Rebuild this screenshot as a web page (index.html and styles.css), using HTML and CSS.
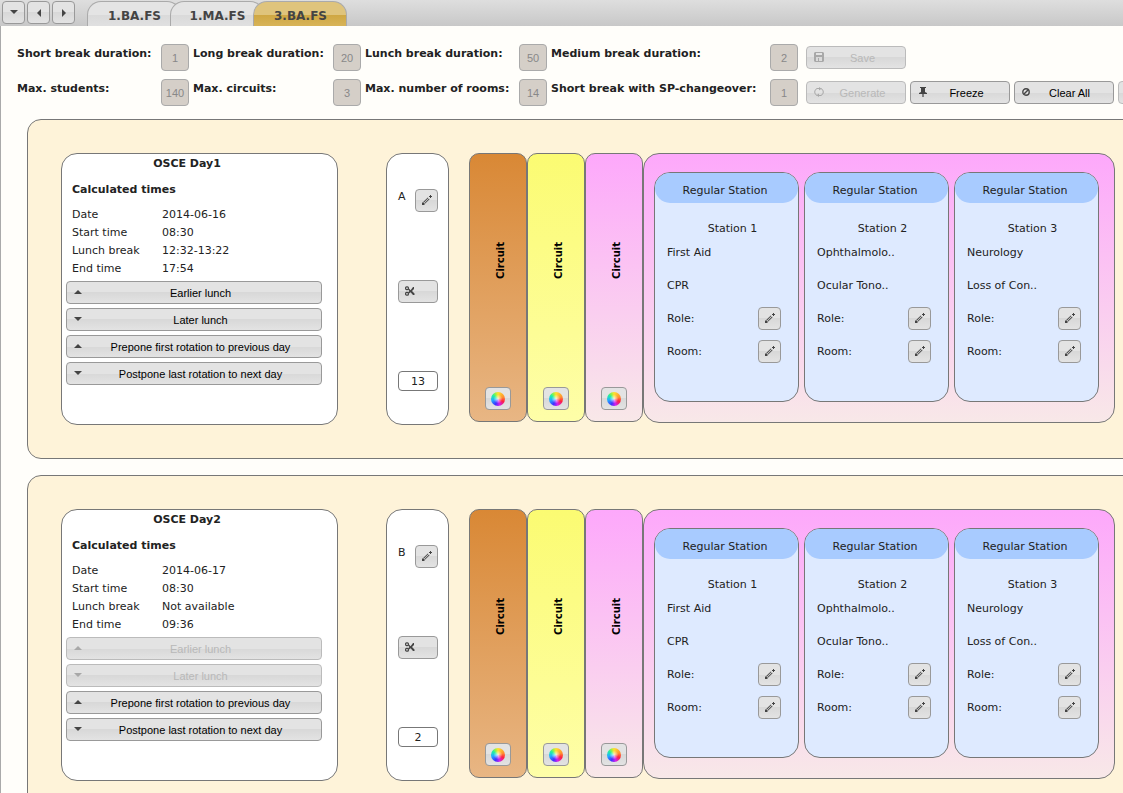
FILE: index.html
```
<!DOCTYPE html>
<html lang="en">
<head>
<meta charset="utf-8">
<title>OSCE circuit planning</title>
<link rel="stylesheet" href="styles.css">
</head>
<body>
<svg class="sprite" aria-hidden="true">
  <symbol id="down" viewBox="0 0 8 4"><path d="M0 0h8L4 4z"/></symbol>
  <symbol id="up" viewBox="0 0 8 4"><path d="M0 4h8L4 0z"/></symbol>
  <symbol id="left" viewBox="0 0 4 8"><path d="M4 0v8L0 4z"/></symbol>
  <symbol id="right" viewBox="0 0 4 8"><path d="M0 0v8l4-4z"/></symbol>
  <symbol id="pencil" viewBox="0 0 10 10"><path d="M0 10V8l1-1 1 1 1 1-1 1zM1.400 6.800 5.800 2.400l.6.6L2 7.400zM2.600 8 7 3.600l.6.6L3.200 8.600zM7 2V1h1V0h1v1h1v1H9v1H8V2z"/></symbol>
  <symbol id="scissors" viewBox="0 0 10 10"><g fill="none" stroke="currentColor" stroke-width="1.200"><rect x=".6" y=".8" width="2.800" height="2.800" rx="1"/><rect x=".6" y="6.400" width="2.800" height="2.800" rx="1"/></g><path d="M3 3.400 4 2.600l1.600 1.600L8 1h1v2L7 5l2.500 2.500V9H8L5.600 6.200 4 7.600l-1-1L4.400 5z"/></symbol>
  <symbol id="disk" viewBox="0 0 10 10"><path fill-rule="evenodd" d="M1 0h8l1 1v8l-1 1H1L0 9V1zM2 1v2h6V1zM2 5v4h2V6h1v3h3V5z"/></symbol>
  <symbol id="refresh" viewBox="0 0 10 10"><g fill="none" stroke="currentColor" stroke-width="1"><path d="M3 8.500C0 7 0 3 3 1.500h3M7 1.500c3 1.500 3 5.500 0 7H4"/></g><path d="M5 0v3.500L7.500 1.700zM5 6.500V10L2.500 8.300z"/></symbol>
  <symbol id="pin" viewBox="0 0 8 10"><path d="M1 0h6v1H6v4l2 1v1H4.600v3H3.400V7H0V6l2-1V1H1z"/></symbol>
  <symbol id="cancel" viewBox="0 0 8 8"><g fill="none" stroke="currentColor" stroke-width="1.400"><circle cx="4" cy="4" r="3.200"/><path d="M2 6l4-4"/></g></symbol>
</svg>

<header class="topbar">
  <div class="scrollers">
    <button class="btn square" aria-label="List tabs"><svg class="ico wide"><use href="#down"/></svg></button>
    <button class="btn square" aria-label="Previous tab"><svg class="ico tall"><use href="#left"/></svg></button>
    <button class="btn square" aria-label="Next tab"><svg class="ico tall"><use href="#right"/></svg></button>
  </div>
  <nav class="tabs">
    <a class="tab" href="#">1.BA.FS</a>
    <a class="tab" href="#">1.MA.FS</a>
    <a class="tab active" href="#">3.BA.FS</a>
  </nav>
</header>

<main class="page">
  <form class="settings">
    <label for="sb">Short break duration:</label><input id="sb" value="1" disabled>
    <label for="lb">Long break duration:</label><input id="lb" value="20" disabled>
    <label for="lu">Lunch break duration:</label><input id="lu" value="50" disabled>
    <label for="mb">Medium break duration:</label><input id="mb" value="2" disabled>
    <div class="actions">
      <button type="button" class="btn" disabled><svg class="ico"><use href="#disk"/></svg><span>Save</span></button>
    </div>
    <label for="ms">Max. students:</label><input id="ms" value="140" disabled>
    <label for="mc">Max. circuits:</label><input id="mc" value="3" disabled>
    <label for="mr">Max. number of rooms:</label><input id="mr" value="14" disabled>
    <label for="sp">Short break with SP-changeover:</label><input id="sp" value="1" disabled>
    <div class="actions">
      <button type="button" class="btn" disabled><svg class="ico"><use href="#refresh"/></svg><span>Generate</span></button>
      <button type="button" class="btn"><svg class="ico"><use href="#pin"/></svg><span>Freeze</span></button>
      <button type="button" class="btn"><svg class="ico small"><use href="#cancel"/></svg><span>Clear All</span></button>
      <button type="button" class="btn" disabled aria-label="More"></button>
    </div>
  </form>

  <section class="day">
    <div class="card info">
      <h2>OSCE Day1</h2>
      <h3>Calculated times</h3>
      <dl>
        <dt>Date</dt><dd>2014-06-16</dd>
        <dt>Start time</dt><dd>08:30</dd>
        <dt>Lunch break</dt><dd>12:32-13:22</dd>
        <dt>End time</dt><dd>17:54</dd>
      </dl>
      <div class="moves">
        <button class="btn"><svg class="ico wide"><use href="#up"/></svg><span>Earlier lunch</span></button>
        <button class="btn"><svg class="ico wide"><use href="#down"/></svg><span>Later lunch</span></button>
        <button class="btn"><svg class="ico wide"><use href="#up"/></svg><span>Prepone first rotation to previous day</span></button>
        <button class="btn"><svg class="ico wide"><use href="#down"/></svg><span>Postpone last rotation to next day</span></button>
      </div>
    </div>
    <div class="card sequence">
      <div class="name"><span>A</span><button class="btn square" aria-label="Edit sequence"><svg class="ico"><use href="#pencil"/></svg></button></div>
      <button class="btn cut" aria-label="Split sequence"><svg class="ico"><use href="#scissors"/></svg></button>
      <input class="count" aria-label="Rotations" value="13">
    </div>
    <div class="circuits">
      <div class="circuit orange"><span>Circuit</span><button class="btn color" aria-label="Circuit color"><i class="wheel"></i></button></div>
      <div class="circuit yellow"><span>Circuit</span><button class="btn color" aria-label="Circuit color"><i class="wheel"></i></button></div>
      <div class="circuit pink"><span>Circuit</span><button class="btn color" aria-label="Circuit color"><i class="wheel"></i></button></div>
      <div class="stations pink">
        <article class="station">
          <h4>Regular Station</h4><h5>Station 1</h5>
          <p>First Aid</p><p>CPR</p>
          <p>Role:<button class="btn square" aria-label="Edit role"><svg class="ico"><use href="#pencil"/></svg></button></p>
          <p>Room:<button class="btn square" aria-label="Edit room"><svg class="ico"><use href="#pencil"/></svg></button></p>
        </article>
        <article class="station">
          <h4>Regular Station</h4><h5>Station 2</h5>
          <p>Ophthalmolo..</p><p>Ocular Tono..</p>
          <p>Role:<button class="btn square" aria-label="Edit role"><svg class="ico"><use href="#pencil"/></svg></button></p>
          <p>Room:<button class="btn square" aria-label="Edit room"><svg class="ico"><use href="#pencil"/></svg></button></p>
        </article>
        <article class="station">
          <h4>Regular Station</h4><h5>Station 3</h5>
          <p>Neurology</p><p>Loss of Con..</p>
          <p>Role:<button class="btn square" aria-label="Edit role"><svg class="ico"><use href="#pencil"/></svg></button></p>
          <p>Room:<button class="btn square" aria-label="Edit room"><svg class="ico"><use href="#pencil"/></svg></button></p>
        </article>
      </div>
    </div>
  </section>

  <section class="day">
    <div class="card info">
      <h2>OSCE Day2</h2>
      <h3>Calculated times</h3>
      <dl>
        <dt>Date</dt><dd>2014-06-17</dd>
        <dt>Start time</dt><dd>08:30</dd>
        <dt>Lunch break</dt><dd>Not available</dd>
        <dt>End time</dt><dd>09:36</dd>
      </dl>
      <div class="moves">
        <button class="btn" disabled><svg class="ico wide"><use href="#up"/></svg><span>Earlier lunch</span></button>
        <button class="btn" disabled><svg class="ico wide"><use href="#down"/></svg><span>Later lunch</span></button>
        <button class="btn"><svg class="ico wide"><use href="#up"/></svg><span>Prepone first rotation to previous day</span></button>
        <button class="btn"><svg class="ico wide"><use href="#down"/></svg><span>Postpone last rotation to next day</span></button>
      </div>
    </div>
    <div class="card sequence">
      <div class="name"><span>B</span><button class="btn square" aria-label="Edit sequence"><svg class="ico"><use href="#pencil"/></svg></button></div>
      <button class="btn cut" aria-label="Split sequence"><svg class="ico"><use href="#scissors"/></svg></button>
      <input class="count" aria-label="Rotations" value="2">
    </div>
    <div class="circuits">
      <div class="circuit orange"><span>Circuit</span><button class="btn color" aria-label="Circuit color"><i class="wheel"></i></button></div>
      <div class="circuit yellow"><span>Circuit</span><button class="btn color" aria-label="Circuit color"><i class="wheel"></i></button></div>
      <div class="circuit pink"><span>Circuit</span><button class="btn color" aria-label="Circuit color"><i class="wheel"></i></button></div>
      <div class="stations pink">
        <article class="station">
          <h4>Regular Station</h4><h5>Station 1</h5>
          <p>First Aid</p><p>CPR</p>
          <p>Role:<button class="btn square" aria-label="Edit role"><svg class="ico"><use href="#pencil"/></svg></button></p>
          <p>Room:<button class="btn square" aria-label="Edit room"><svg class="ico"><use href="#pencil"/></svg></button></p>
        </article>
        <article class="station">
          <h4>Regular Station</h4><h5>Station 2</h5>
          <p>Ophthalmolo..</p><p>Ocular Tono..</p>
          <p>Role:<button class="btn square" aria-label="Edit role"><svg class="ico"><use href="#pencil"/></svg></button></p>
          <p>Room:<button class="btn square" aria-label="Edit room"><svg class="ico"><use href="#pencil"/></svg></button></p>
        </article>
        <article class="station">
          <h4>Regular Station</h4><h5>Station 3</h5>
          <p>Neurology</p><p>Loss of Con..</p>
          <p>Role:<button class="btn square" aria-label="Edit role"><svg class="ico"><use href="#pencil"/></svg></button></p>
          <p>Room:<button class="btn square" aria-label="Edit room"><svg class="ico"><use href="#pencil"/></svg></button></p>
        </article>
      </div>
    </div>
  </section>
</main>
</body>
</html>
```
FILE: styles.css
```
* { box-sizing: border-box; margin: 0; padding: 0; }

body {
  display: flex;
  flex-direction: column;
  height: 100vh;
  overflow: hidden;
  background: #fffefa;
  color: #222;
  font: 11px/18px Verdana, "DejaVu Sans", sans-serif;
}

.sprite { position: absolute; width: 0; height: 0; }

.topbar {
  display: flex;
  flex: none;
  height: 26px;
  padding: 1px 2px 0;
  background: linear-gradient(#dedede, #c8c8c8);
}
.scrollers { display: flex; gap: 2px; width: 85px; }
.tabs { display: flex; }
.tab {
  width: 94px;
  padding: 5px 0 0 1px;
  margin-right: -11px;
  border: 1px solid #aaa;
  border-bottom: 0;
  border-radius: 14px 14px 0 0;
  background: linear-gradient(#e4e4e4 55%, #dadada 55%, #e0e0e0);
  color: #444;
  font-size: 12px;
  font-weight: bold;
  text-align: center;
  text-decoration: none;
}
.tab.active { background: linear-gradient(#dfc47c 55%, #cfa743 55%, #d8b458); }

.btn {
  display: flex;
  align-items: center;
  height: 23px;
  padding: 0 10px;
  border: 1px solid #999;
  border-radius: 4px;
  background: linear-gradient(#e3e3e3 50%, #d8d8d8 50%, #e3e3e3);
  color: #000;
  font: 11px/14px "Liberation Sans", Arial, sans-serif;
}
.btn:disabled { border-color: #bbb; color: #b8b8b8; }
.btn:disabled .ico { color: #a8a8a8; }
.btn span { flex: 1; text-align: center; }
.square { justify-content: center; width: 23px; padding: 0; }

.ico { flex: none; width: 10px; height: 10px; margin-bottom: 2px; fill: currentColor; color: #444; }
.ico.wide { width: 8px; height: 4px; }
.ico.small { width: 8px; height: 8px; }
.ico.tall { width: 4px; height: 8px; margin: 0; }

.page { flex: 1; min-height: 0; border-left: 1px solid #aaa; overflow: hidden; }

.settings {
  display: grid;
  grid-template-columns: 140px 28px 136px 28px 150px 28px 215px 28px 1fr;
  gap: 8px 4px;
  padding: 18px 0 0 16px;
}
.settings label { padding-top: 1px; font-weight: bold; white-space: nowrap; }
.settings input {
  width: 28px;
  height: 27px;
  border: 1px solid #aaa;
  border-radius: 4px;
  background: #d5cfc8;
  color: #888;
  font: 11px/14px "Liberation Sans", Arial, sans-serif;
  text-align: center;
}
.actions { display: flex; gap: 4px; padding: 2px 0 0 4px; }
.actions .btn { flex: none; width: 100px; padding: 0 4px 0 7px; }

.day {
  display: flex;
  align-items: flex-start;
  margin: 13px -40px 16px 26px;
  padding: 33px;
  border: 1px solid #777;
  border-radius: 14px;
  background: #fef3d9;
}
.day + .day { margin-top: 0; }

.card { flex: none; min-height: 272px; border: 1px solid #777; border-radius: 16px; background: #fff; }
.info { width: 277px; padding: 1px 15px 0 4px; margin-right: 48px; }
.info h2 { padding-right: 14px; font-size: 11px; text-align: center; }
.info h3 { padding: 8px 6px 7px; font-size: 11px; }
.info dl { display: grid; grid-template-columns: 90px 1fr; padding: 0 6px; }
.moves { display: grid; gap: 4px; padding-top: 3px; }
.moves .btn { padding: 0 2px 0 7px; }

.sequence {
  display: flex;
  flex-direction: column;
  justify-content: space-between;
  width: 63px;
  margin-right: 20px;
  padding: 35px 10px 33px 11px;
}
.name { display: flex; justify-content: space-between; align-items: flex-start; line-height: 16px; }
.cut { width: 40px; padding: 0 6px; }
.count {
  width: 40px;
  height: 20px;
  border: 1px solid #777;
  border-radius: 4px;
  background: #fff;
  color: #222;
  font: inherit;
  text-align: center;
}

.circuits { display: flex; align-items: flex-start; }
.circuit {
  display: flex;
  flex-direction: column;
  align-items: center;
  justify-content: space-between;
  width: 58px;
  height: 269px;
  padding: 88px 0 11px;
  border: 1px solid #777;
  border-radius: 10px;
}
.circuit span {
  padding-right: 6px;
  writing-mode: vertical-rl;
  transform: rotate(180deg);
  color: #000;
  font-size: 10px;
  font-weight: bold;
}
.orange { background: linear-gradient(#d98835, #e8b684); }
.yellow { background: linear-gradient(#fbfb72, #fefea8); }
.pink { background: linear-gradient(#fda8fb, #f8e8e8); }
.color { justify-content: center; width: 26px; padding: 0; }
.wheel {
  width: 14px;
  height: 14px;
  border-radius: 50%;
  background: radial-gradient(#fffc, transparent 45%), conic-gradient(#ffe030, #ff9030 70deg, #ff2040 115deg, #d020f0 165deg, #4030ff 205deg, #20b0ff 260deg, #20f0a0 305deg, #a0f040 335deg, #ffe030);
}

.stations {
  display: flex;
  gap: 5px;
  height: 270px;
  padding: 18px 15px 0 10px;
  border: 1px solid #777;
  border-radius: 16px;
}
.station {
  width: 145px;
  height: 230px;
  border: 1px solid #777;
  border-radius: 16px;
  background: #deeaff;
}
.station h4 {
  height: 30px;
  padding: 8px 3px 0 0;
  border-radius: 15px;
  background: #a8cbff;
  font-size: 11px;
  font-weight: normal;
  line-height: 20px;
  text-align: center;
}
.station h5 {
  padding: 19px 0 0 12px;
  font-size: 11px;
  font-weight: normal;
  line-height: 14px;
  text-align: center;
}
.station p { display: flex; align-items: center; justify-content: space-between; height: 33px; padding: 0 17px 0 12px; }
```
